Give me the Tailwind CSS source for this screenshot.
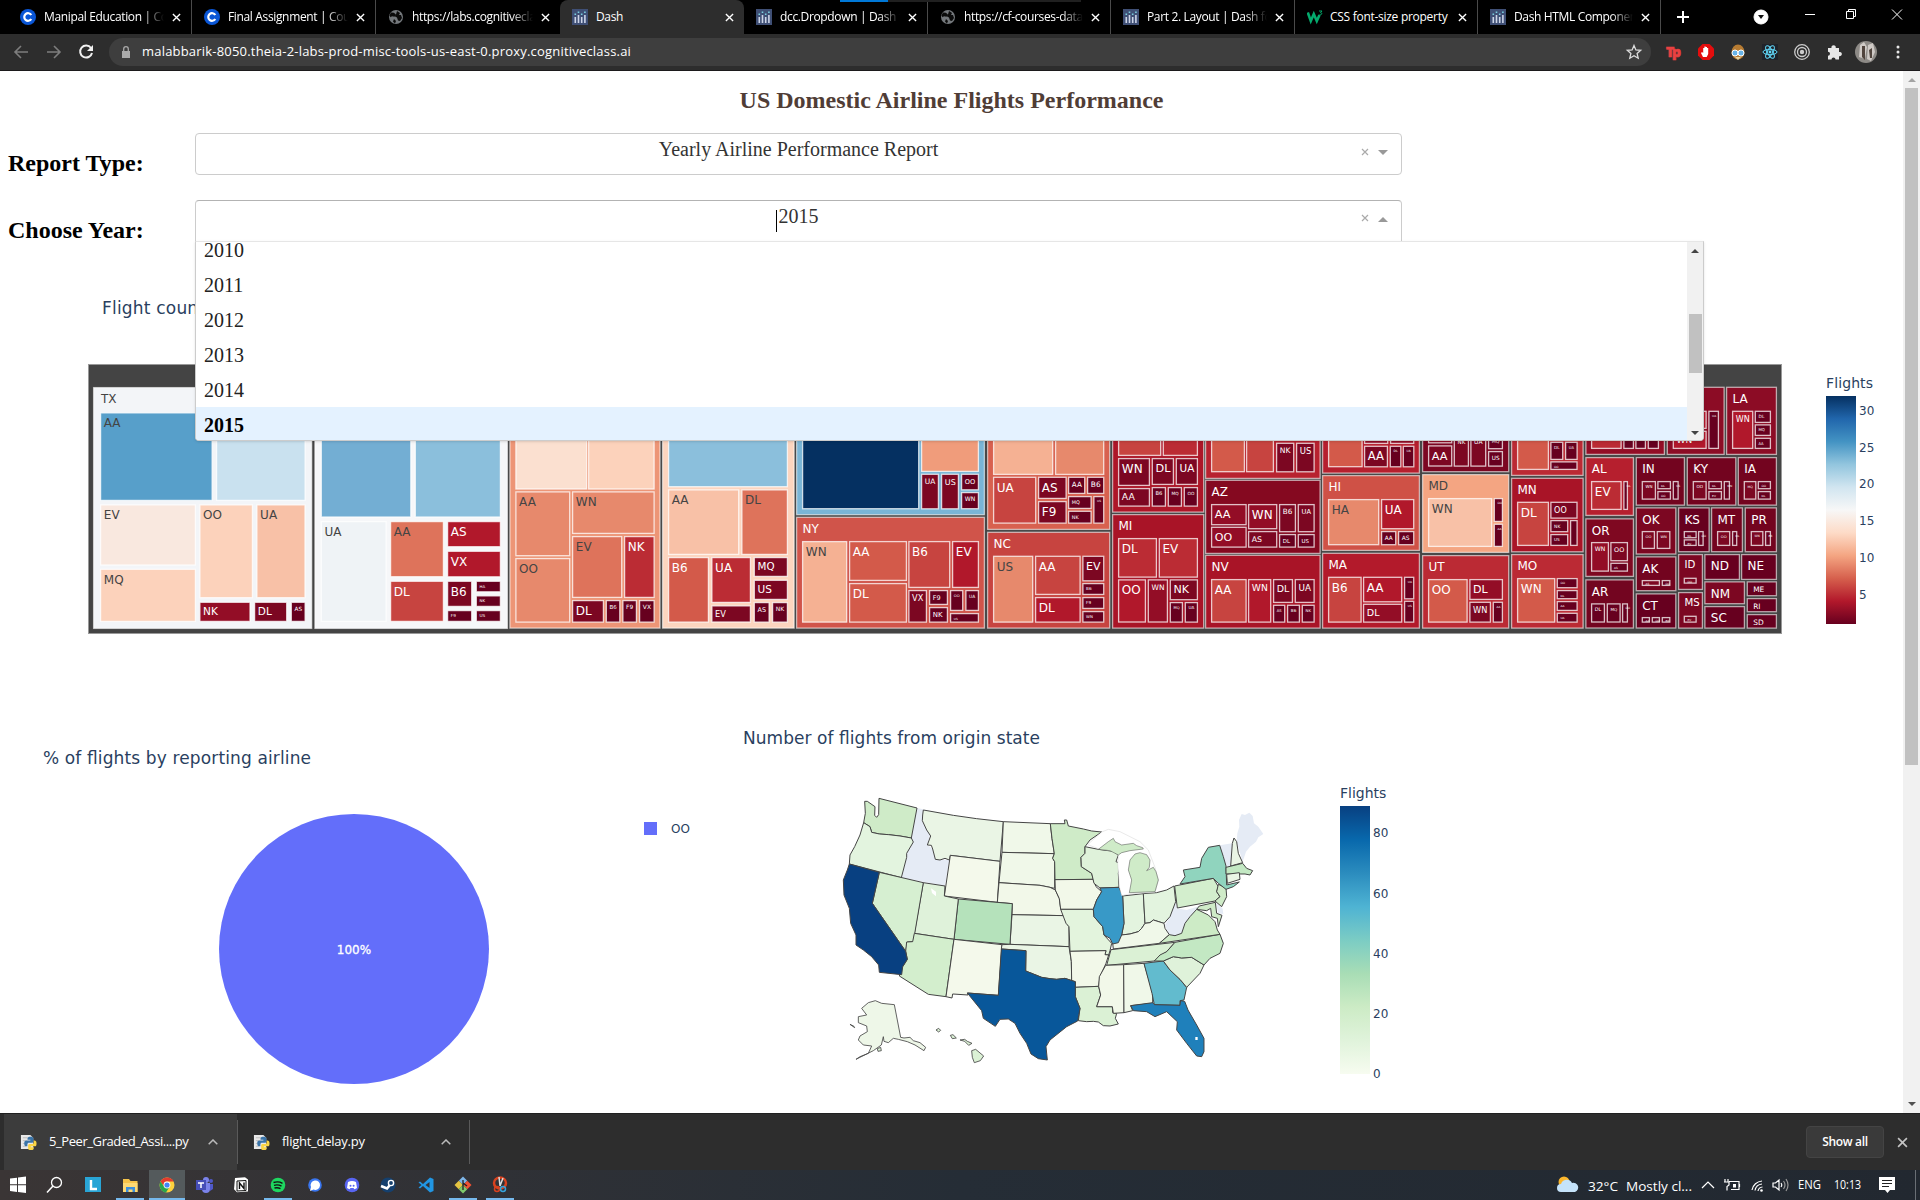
<!DOCTYPE html>
<html lang="en">
<head>
<meta charset="utf-8">
<title>Dash</title>
<script src="https://cdn.jsdelivr.net/npm/@tailwindcss/browser@4"></script>
</head>
<body class="w-[1920px] h-[1200px] overflow-hidden flex flex-col bg-white font-['Open_Sans','Noto_Sans',sans-serif]">
<svg class="hidden">
  <defs>
    <symbol id="coursera" viewBox="0 0 16 16"><circle cx="8" cy="8" r="8" fill="#0a56d6"/><path d="M11.3 6A3.8 3.8 0 1 0 11.3 10" fill="none" stroke="#fff" stroke-width="2.2"/></symbol>
    <symbol id="globe" viewBox="0 0 16 16"><circle cx="8" cy="8" r="7" fill="#74787c"/><path d="M3 3.500l3 .3 2 2-1.500 2-2.500-.5-1.500 1-1-2zM9 2l3 2-1 2h2l1 3-2 3-2-.5-1-3-2-1 1-2zM6 10l2 2-1 2.500-2-2z" fill="#0b0b0b"/></symbol>
    <symbol id="dash" viewBox="0 0 16 16"><path d="M0 0h16v16H0z" fill="#3f4f75"/><path d="M2.500 8h1.600v6H2.500zM5.700 6h1.600v8H5.700zM8.900 8h1.600v6H8.900zM12.100 6h1.600v8h-1.600z" fill="#cdd5e8"/><path d="M2.500 4.500h1.600v1.600H2.500zM5.700 2.500h1.600v1.600H5.700zM8.900 4.500h1.600v1.600H8.900zM12.100 2.500h1.600v1.600h-1.600z" fill="#7bd0df"/></symbol>
    <symbol id="w3" viewBox="0 0 16 16"><path d="M.8 3.500l3 8.500 3-7 3 7 2.700-6" fill="none" stroke="#04aa6d" stroke-width="2.600"/><path d="M12 2h3l-1.500 1.700c2 0 1.700 2.600-1 2" fill="none" stroke="#04aa6d" stroke-width="1"/></symbol>
    <symbol id="x" viewBox="0 0 10 10"><path d="M1 1l8 8M9 1l-8 8" fill="none" stroke="currentColor" stroke-width="1.500"/></symbol>
    <symbol id="py" viewBox="0 0 18 18"><path d="M1 1h10l3 3v12H1z" fill="#e9e9e9"/><path d="M3 4h5M3 7h4M3 10h3M3 13h3" stroke="#bbb"/><path d="M11 3c-3 0-3 1-3 3h3v1H7c-2 0-2.500 1-2.500 3s.8 3 2.300 3h1v-2c0-1 .8-1.700 1.800-1.700h3c1 0 1.600-.7 1.600-1.600V5c0-1.500-1-2-3.200-2z" fill="#3a74a8"/><path d="M11.500 17c3 0 3-1 3-3h-3v-1h4c1.600 0 2-1 2-3s-.8-3-2.300-3h-.7v2c0 1-.8 1.700-1.800 1.700h-2.500c-1 0-1.600.7-1.600 1.600V15c0 1.500 1 2 2.900 2z" fill="#fbd545"/></symbol>
  </defs>
</svg>

<!-- tab strip -->
<header class="relative h-[34px] bg-black flex items-stretch pl-2 text-white text-[12px] tracking-[-0.35px]">
  <div class="absolute left-[840px] top-0 h-[2px] w-[241px] bg-[#202020]"><div class="h-full w-12 bg-[#0078d7]"></div></div>
  <div class="w-[184px] flex items-center pl-3 pr-[10px] border-r border-[#4a4a4a] bg-clip-content"><svg class="size-4 shrink-0 mr-2"><use href="#coursera"/></svg><span class="flex-1 overflow-hidden whitespace-nowrap [mask-image:linear-gradient(90deg,#000_82%,transparent)]">Manipal Education | Coursera</span><svg class="size-[9px] ml-2 shrink-0"><use href="#x"/></svg></div>
  <div class="w-[184px] flex items-center pl-3 pr-[10px] border-r border-[#4a4a4a]"><svg class="size-4 shrink-0 mr-2"><use href="#coursera"/></svg><span class="flex-1 overflow-hidden whitespace-nowrap [mask-image:linear-gradient(90deg,#000_82%,transparent)]">Final Assignment | Coursera</span><svg class="size-[9px] ml-2 shrink-0"><use href="#x"/></svg></div>
  <div class="w-[184px] flex items-center pl-3 pr-[10px]"><svg class="size-4 shrink-0 mr-2"><use href="#globe"/></svg><span class="flex-1 overflow-hidden whitespace-nowrap [mask-image:linear-gradient(90deg,#000_82%,transparent)]">https://labs.cognitiveclass.ai</span><svg class="size-[9px] ml-2 shrink-0"><use href="#x"/></svg></div>
  <div class="w-[184px] flex items-center pl-3 pr-[10px] bg-[#2d2d2d] rounded-t-lg"><svg class="size-4 shrink-0 mr-2"><use href="#dash"/></svg><span class="flex-1">Dash</span><svg class="size-[9px] ml-2 shrink-0"><use href="#x"/></svg></div>
  <div class="w-[184px] flex items-center pl-3 pr-[10px] border-r border-[#4a4a4a]"><svg class="size-4 shrink-0 mr-2"><use href="#dash"/></svg><span class="flex-1 overflow-hidden whitespace-nowrap [mask-image:linear-gradient(90deg,#000_82%,transparent)]">dcc.Dropdown | Dash for Python</span><svg class="size-[9px] ml-2 shrink-0"><use href="#x"/></svg></div>
  <div class="w-[183px] flex items-center pl-3 pr-[10px] border-r border-[#4a4a4a]"><svg class="size-4 shrink-0 mr-2"><use href="#globe"/></svg><span class="flex-1 overflow-hidden whitespace-nowrap [mask-image:linear-gradient(90deg,#000_82%,transparent)]">https://cf-courses-data.s3.us</span><svg class="size-[9px] ml-2 shrink-0"><use href="#x"/></svg></div>
  <div class="w-[184px] flex items-center pl-3 pr-[10px] border-r border-[#4a4a4a]"><svg class="size-4 shrink-0 mr-2"><use href="#dash"/></svg><span class="flex-1 overflow-hidden whitespace-nowrap [mask-image:linear-gradient(90deg,#000_82%,transparent)]">Part 2. Layout | Dash for Python</span><svg class="size-[9px] ml-2 shrink-0"><use href="#x"/></svg></div>
  <div class="w-[183px] flex items-center pl-3 pr-[10px] border-r border-[#4a4a4a]"><svg class="size-4 shrink-0 mr-[7px]"><use href="#w3"/></svg><span class="flex-1 overflow-hidden whitespace-nowrap tracking-[-0.28px]">CSS font-size property</span><svg class="size-[9px] ml-2 shrink-0"><use href="#x"/></svg></div>
  <div class="w-[183px] flex items-center pl-3 pr-[10px] border-r border-[#4a4a4a]"><svg class="size-4 shrink-0 mr-2"><use href="#dash"/></svg><span class="flex-1 overflow-hidden whitespace-nowrap [mask-image:linear-gradient(90deg,#000_82%,transparent)]">Dash HTML Components</span><svg class="size-[9px] ml-2 shrink-0"><use href="#x"/></svg></div>
  <svg class="w-[259px] h-[34px]" viewBox="1661 0 259 34" fill="none" stroke="#fff"><path d="M1677 17h12M1683 11v12" stroke-width="2"/><circle cx="1761" cy="17" r="7" fill="#fff"/><path d="M1758 15h6l-3 4z" fill="#111" stroke="none"/><path d="M1805 14.500h10"/><path d="M1846.500 11.500h7v7h-7zM1848.500 11v-1.500h7v7h-1.500M1892 9.500l10 10M1902 9.500l-10 10"/></svg>
</header>

<!-- toolbar -->
<div class="h-[37px] bg-[#2d2d2d] border-b border-[#1c1a1c] flex items-center">
  <svg class="w-[109px] h-9" viewBox="0 34 109 36" fill="none" stroke="#7d7d7d" stroke-width="1.600"><path d="M28 52H15M21 46l-6 6 6 6M47 52h13M54 46l6 6-6 6"/><path d="M91 48a6 6 0 1 0 1 5" stroke="#f1f1f1" stroke-width="2"/><path d="M93 45v6h-6z" fill="#f1f1f1" stroke="none"/></svg>
  <div class="w-[1542px] h-[28px] rounded-full bg-[#3e3e3e] flex items-center pl-3 pr-2 text-white text-[13px]">
    <svg class="w-[10px] h-3 mr-[11px]" viewBox="0 0 10 12"><path d="M1 5h8v7H1z" fill="#aaa"/><path d="M2.700 5V3a2.300 2.300 0 0 1 4.600 0v2" fill="none" stroke="#aaa" stroke-width="1.300"/></svg>
    <span class="flex-1 whitespace-nowrap tracking-[0.2px]">malabbarik-8050.theia-2-labs-prod-misc-tools-us-east-0.proxy.cognitiveclass.ai</span>
    <svg class="size-[18px]" viewBox="0 0 18 18"><path d="M9 2.500l1.900 4.400 4.800.4-3.600 3.200 1.100 4.700L9 12.700l-4.200 2.500 1.100-4.700L2.300 7.300l4.800-.4z" fill="none" stroke="#ddd" stroke-width="1.300"/></svg>
  </div>
  <svg class="flex-1 h-9" viewBox="1651 34 269 36"><text x="1666" y="57" class="font-extrabold text-[14px]" fill="#e94141" stroke="#e94141" stroke-width=".6" textLength="15">Tp</text>
    <path d="M1702.500 44h7l4.500 4.500v7l-4.500 4.500h-7l-4.500-4.500v-7z" fill="#e40d0d"/><path d="M1703 57l-2-4 1-1 1.200 1v-5h1.200v3-4.500h1.300v4.500-4h1.300v4-3h1.200v6l-1.500 3z" fill="#fff"/>
    <ellipse cx="1738" cy="52" rx="6.500" ry="7.500" fill="#b67b32"/><circle cx="1735" cy="53" r="3" fill="#68b4e8" stroke="#fff"/><circle cx="1741" cy="53" r="3" fill="#68b4e8" stroke="#fff"/><path d="M1735 57h6l-3 3z" fill="#e8d3a0"/>
    <path d="M1762 44h16v16h-16z" fill="#20232a"/><g fill="none" stroke="#61dafb"><ellipse cx="1770" cy="52" rx="7" ry="2.700"/><ellipse cx="1770" cy="52" rx="7" ry="2.700" transform="rotate(60 1770 52)"/><ellipse cx="1770" cy="52" rx="7" ry="2.700" transform="rotate(120 1770 52)"/></g><circle cx="1770" cy="52" r="1.400" fill="#61dafb"/>
    <g fill="none" stroke="#ccc" stroke-width="1.300"><circle cx="1802" cy="52" r="7.300"/><circle cx="1802" cy="52" r="4.500"/></g><circle cx="1802" cy="52" r="2.200" fill="#ccc"/>
    <path d="M1828 48h3.500a2.200 2.200 0 1 1 4.200 0h3.300v4a2.200 2.200 0 1 1 0 4.200v3.300h-3.500a2 2 0 1 0-4 0h-3.500v-3.800a2 2 0 1 0 0-4z" fill="#e8e8e8"/>
    <circle cx="1866" cy="52" r="11" fill="#8d8a86"/><path d="M1860 45l4-3 3 5-2 12-6-2zM1868 45l5-2 2 9-4 9-4-2z" fill="#cfcac6"/><path d="M1862 46h3v14l-3-3zM1869 50l3-2v10h-2z" fill="#51453e"/>
    <g fill="#e8e8e8"><circle cx="1898" cy="47" r="1.500"/><circle cx="1898" cy="52" r="1.500"/><circle cx="1898" cy="57" r="1.500"/></g>
  </svg>
</div>

<!-- page -->
<div class="h-[1042px] flex bg-white">
<main class="relative w-[1903px] h-[1042px] overflow-hidden">
  <section class="h-[199px] font-['Liberation_Serif',serif]">
    <h1 class="h-[62px] pt-[12px] text-center text-[24px] leading-[34px] font-bold text-[#503d36]">US Domestic Airline Flights Performance</h1>
    <div class="flex h-[67px]">
      <h2 class="w-[195px] pl-2 pt-[16px] text-[24px] leading-[28px] font-bold">Report Type:</h2>
      <div class="w-[1207px] h-[42px] border border-[#ccc] rounded flex text-[20px] text-[#333]">
        <span class="flex-1 text-center leading-[30px]">Yearly Airline Performance Report</span>
        <svg class="absolute left-[1358px] top-[73px] w-8 h-4" viewBox="0 0 32 16"><path d="M4 5l6 6M10 5l-6 6" stroke="#aaa" stroke-width="1.200"/><path d="M20 6h10l-5 5z" fill="#999"/></svg>
      </div>
    </div>
    <div class="flex h-[67px]">
      <h2 class="w-[195px] pl-2 pt-[16px] text-[24px] leading-[28px] font-bold">Choose Year:</h2>
      <div class="w-[1207px] h-[42px] border border-[#ccc] border-t-[#b3b3b3] rounded-t flex text-[20px] text-[#333]">
        <span class="flex-1 pr-[3px] text-center leading-[30px]"><span class="inline-block w-px h-[22px] bg-black align-middle translate-y-[3px] mr-[2px]"></span>2015</span>
        <svg class="absolute left-[1358px] top-[139px] w-8 h-4" viewBox="0 0 32 16"><path d="M4 5l6 6M10 5l-6 6" stroke="#aaa" stroke-width="1.200"/><path d="M20 12h10l-5-5z" fill="#999"/></svg>
      </div>
    </div>
  </section>

  <svg id="tree" class="block w-[1903px] h-[430px] font-['DejaVu_Sans',sans-serif]" viewBox="0 270 1903 430">
    <defs>
      <linearGradient id="rdbu" x1="0" y1="1" x2="0" y2="0"><stop offset="0" stop-color="#67001f"/><stop offset=".1" stop-color="#b2182b"/><stop offset=".2" stop-color="#d6604d"/><stop offset=".3" stop-color="#f4a582"/><stop offset=".4" stop-color="#fddbc7"/><stop offset=".5" stop-color="#f7f7f7"/><stop offset=".6" stop-color="#d1e5f0"/><stop offset=".7" stop-color="#92c5de"/><stop offset=".8" stop-color="#4393c3"/><stop offset=".9" stop-color="#2166ac"/><stop offset="1" stop-color="#053061"/></linearGradient>
    </defs>
    <g fill="#2a3f5f"><text x="102" y="314" class="text-[17px]" textLength="103">Flight count</text>
    <text x="1826" y="388" class="text-[14px]" textLength="47">Flights</text>
    <g class="text-[12px]"><text x="1859" y="415">30</text><text x="1859" y="452">25</text><text x="1859" y="488">20</text><text x="1859" y="525">15</text><text x="1859" y="562">10</text><text x="1859" y="599">5</text></g></g>
    <rect x="1826" y="396" width="30" height="228" fill="url(#rdbu)"/>
    <rect x="88.500" y="364.500" width="1693" height="269" fill="#444" stroke="#999"/>
  </svg>

  <div class="flex h-[413px]">
    <svg class="w-[743px] h-[413px] font-['DejaVu_Sans',sans-serif]" viewBox="0 700 743 413">
      <text x="43" y="764" class="text-[17px]" fill="#2a3f5f" textLength="268">% of flights by reporting airline</text>
      <circle cx="354" cy="949" r="135" fill="#636efa"/>
      <text x="354" y="954" class="text-[12px]" text-anchor="middle" fill="#fff" stroke="#fff" stroke-width=".3">100%</text>
      <path d="M644 822h13v13h-13z" fill="#636efa"/><text x="671" y="833" class="text-[12px]" fill="#2a3f5f">OO</text>
    </svg>
    <svg class="w-[1160px] h-[413px] font-['DejaVu_Sans',sans-serif]" viewBox="743 700 1160 413">
      <defs><linearGradient id="gnbu" x1="0" y1="1" x2="0" y2="0"><stop offset="0" stop-color="#f7fcf0"/><stop offset=".125" stop-color="#e0f3db"/><stop offset=".25" stop-color="#ccebc5"/><stop offset=".375" stop-color="#a8ddb5"/><stop offset=".5" stop-color="#7bccc4"/><stop offset=".625" stop-color="#4eb3d3"/><stop offset=".75" stop-color="#2b8cbe"/><stop offset=".875" stop-color="#0868ac"/><stop offset="1" stop-color="#084081"/></linearGradient></defs>
      <g fill="#2a3f5f"><text x="743" y="744" class="text-[17px]" textLength="297">Number of flights from origin state</text><text x="1340" y="798" class="text-[14px]">Flights</text>
      <g class="text-[12px]"><text x="1373" y="837">80</text><text x="1373" y="898">60</text><text x="1373" y="958">40</text><text x="1373" y="1018">20</text><text x="1373" y="1078">0</text></g></g>
      <rect x="1340" y="806" width="30" height="268" fill="url(#gnbu)"/>
      <g transform="translate(820 780) scale(.33333)" stroke-linejoin="round">
        <g fill="#e5ebf5">
          <path d="M291 84L310 88 307 120 330 166 322 195 338 207 346 238 388 240 375 318 246 293 260 232 260 218 280 186 274 174z"/>
          <path d="M1199 196L1237 190 1232 258 1216 260z"/><path d="M1250 185L1252 160 1258 140 1257 120 1265 102 1275 105 1288 98 1298 108 1302 130 1315 140 1330 162 1315 172 1308 185 1290 200 1278 215 1268 245z"/>
          <path d="M1067 366L1070 385 1100 390 1138 378 1130 388 1110 410 1095 430 1085 460 1065 467 1045 462 1035 435 1050 410z"/><path d="M1188 368l20 18 2 16-15-2z"/>
        </g>
        <g stroke="#444" stroke-width="3">
          <path fill="#cfebc8" d="M134 64L142 64 165 80 164 106 170 112 176 104 177 55 291 84 274 174 240 168 206 164 178 162 155 157 150 140 131 128 136 100z"/>
          <path fill="#e3f4df" d="M131 128L150 140 155 157 178 162 206 164 240 168 274 174 280 186 260 220 260 232 244 293 88 252 90 225 104 200 120 165z"/>
          <path fill="#eaf5e5" d="M310 90L400 106 470 116 550 125 540 244 391 226 388 240 375 235 360 240 346 238 338 207 334 196 322 195 332 168 320 150 307 122 308 105z"/>
          <path fill="#f4f9eb" d="M391 226L540 244 532 367 373 348z"/>
          <path fill="#f0f8e9" d="M550 125L691 131 696 175 703 221 546 217z"/>
          <path fill="#f0f8e9" d="M546 217L703 221 698 235 704 245 704 325 680 320 660 316 537 308z"/>
          <path fill="#f2f8e9" d="M537 308L660 316 690 322 706 330 718 356 722 386 735 407 576 404 577 371 532 367z"/>
          <path fill="#eaf5e5" d="M576 404L735 407 740 430 747 440 747 500 570 493z"/>
          <path fill="#b5e2bb" d="M415 357L577 371 570 493 402 478z"/>
          <path fill="#dff2da" d="M310 308L375 318 373 348 415 357 402 478 283 460z"/>
          <path fill="#d6efd1" d="M178 277L310 308 280 485 262 486 257 514 157 370z"/>
          <path fill="#d3eecd" d="M283 460L402 478 378 650 325 643 238 588 248 560 262 538 257 514 260 486 278 485z"/>
          <path fill="#f4f9eb" d="M402 478L546 494 535 646 442 639 444 645 398 642 396 654 378 650z"/>
          <path fill="#eaf5e5" d="M546 494L570 493 747 500 754 544 755 602 735 595 710 598 690 596 665 592 640 582 617 573 618 512 544 507z"/>
          <path fill="#cfebc8" d="M691 131L735 131 733 120 740 120 745 138 790 147 815 153 845 156 810 180 795 200 795 220 783 232 784 260 815 280 820 298 705 299 704 245 698 235 703 221 696 175z"/>
          <path fill="#f2f8e9" d="M705 299L820 298 828 320 845 335 830 360 820 388 722 388 718 356 706 330z"/>
          <path fill="#e3f4dd" d="M722 388L820 388 822 410 848 440 852 465 875 490 870 512 866 525 855 524 858 512 750 514 747 440 738 430z"/>
          <path fill="#f2f8e9" d="M750 514L858 512 855 524 866 525 858 550 840 590 836 619 766 622 766 605 755 602 754 544z"/>
          <path fill="#dbf1d5" d="M766 622L836 619 842 645 830 680 877 680 878 698 890 700 886 715 895 732 870 738 850 737 835 726 820 724 800 725 775 722 780 685 766 650z"/>
          <path fill="#dff2da" d="M795 200L835 208 880 214 895 225 888 245 900 250 895 280 897 322 840 324 822 310 815 280 784 260 783 232 795 220z"/>
          <path fill="#e3f4df" d="M908 348L970 341 975 430 965 445 955 455 930 462 905 465 912 430z"/>
          <path fill="#e3f4df" d="M970 341L1010 338 1040 330 1062 318 1067 365 1050 410 1032 430 1000 420 990 428 975 430z"/>
          <path fill="#f0f8e9" d="M905 465L930 462 955 455 965 445 975 430 990 428 1000 420 1032 430 1035 445 1048 464 1018 490 880 507 878 490z"/>
          <path fill="#dbf1d5" d="M873 509L1065 487 1040 515 1003 543 860 556z"/>
          <path fill="#f2f8e9" d="M857 556L911 554 912 698 880 700 877 680 830 680 842 645 836 619 838 590z"/>
          <path fill="#f0f8e9" d="M911 554L972 550 990 610 998 640 998 670 932 677 938 692 912 698z"/>
          <path fill="#62bbce" d="M972 550L1030 543 1050 570 1080 598 1100 622 1092 660 1080 662 1080 676 1003 674 996 640z"/>
          <path fill="#1f80bb" d="M932 677L998 668 1003 674 1080 676 1082 662 1094 664 1104 690 1130 735 1152 775 1152 815 1145 830 1130 828 1100 790 1070 750 1072 725 1040 695 1005 710 980 695 940 692z"/>
          <path fill="#3899c7" d="M840 324L897 322 908 348 912 430 905 465 895 488 878 492 870 475 852 465 848 440 822 410 820 388 830 360 845 335z"/>
          <path fill="#dff2da" d="M1030 543L1060 530 1085 534 1115 532 1152 555 1140 580 1100 622 1080 598 1050 570z"/>
          <path fill="#c3e8c3" d="M1065 487L1200 463 1210 490 1200 520 1170 535 1152 555 1115 532 1085 534 1060 530 1030 543 1003 543 1020 525 1040 515z"/>
          <path fill="#cdebc6" d="M1018 490L1048 464 1065 467 1085 460 1095 430 1110 410 1130 388 1165 405 1185 425 1192 450 1200 463z"/>
          <path fill="#d3eecd" d="M1064 318L1180 295 1195 320 1190 335 1200 350 1185 363 1072 384z"/>
          <path fill="#cfebc8" d="M1130 388L1138 378 1186 367 1190 400 1206 406 1195 440 1192 415 1175 410 1172 385 1160 392z"/>
          <path fill="#cfebc8" d="M1195 313L1218 323 1220 350 1205 380 1185 363 1200 350 1190 335z"/>
          <path fill="#90d4be" d="M1080 312L1095 290 1090 270 1140 262 1145 235 1165 202 1199 196 1210 230 1218 258 1220 315 1258 306 1240 320 1218 328 1195 310 1180 295z"/>
          <path fill="#eaf5e5" d="M1237 190L1242 174 1250 185 1255 220 1268 248 1232 258z"/>
          <path fill="#c3e8c3" d="M1218 262L1268 250 1280 265 1298 272 1290 285 1275 282 1218 282z"/>
          <path fill="#eaf5e5" d="M1220 283L1258 278 1260 298 1222 310z"/>
          <path fill="#084081" d="M88 252L178 277 157 370 257 514 262 538 248 560 245 584 178 577 176 555 155 530 130 510 108 495 108 465 92 430 88 385 72 345 70 300 82 270z"/>
          <path fill="#08579a" d="M544 507L618 512 617 573 640 582 665 592 690 596 710 598 735 595 766 605 766 650 780 685 773 723 740 740 690 780 678 800 682 840 655 836 633 822 620 790 600 760 585 730 565 717 540 718 526 739 490 715 485 692 442 639 535 646z"/>
          <path fill="#eef7e8" stroke-width="2.500" d="M166 662L185 670 223 674 242 772 252 774 270 772 280 782 300 788 317 802 312 812 285 795 262 785 235 778 220 775 205 788 192 784 190 770 184 795 160 812 108 838 120 830 145 820 155 798 130 795 115 780 120 768 142 755 140 738 115 728 115 710 140 705 125 685 145 668z"/>
          <path fill="#dbf1d5" stroke-width="2.500" d="M348 750l8-5 6 6-6 5zM391 766l8-2 10 10-12 2zM420 780l14-2 8 6 14 6-10 6-12-12zM455 812l12-4 24 20-10 14-18 6-6-16zM90 733l12 6 2 4zM172 806l10-4 2 10-10 2z"/>
        </g>
        <path fill="#fff" d="M333 325l15 10 0 14-12-10zM1126 771h7v9h-7z"/>
        <path fill="#fff" stroke="#bbb" stroke-width="1" d="M803 194L845 156 865 148 900 155 960 185 985 210 1005 262 1015 300 1005 337 928 342 905 347 898 320 893 250 895 225 880 214 835 206z"/>
        <g fill="#cfebc8" stroke="#444" stroke-width="1.500"><path d="M835 208L865 185 880 175 885 185 905 195 940 190 950 197 968 203 970 207 930 212 905 218 895 225 870 212z"/>
        <path d="M928 338L935 300 925 270 930 240 945 222 960 218 980 224 990 240 988 262 980 272 1000 262 1008 275 1015 300 1005 335z"/></g>
      </g>
    </svg>
  </div>

  <!-- year menu -->
  <div class="absolute left-[195px] top-[170px] w-[1509px] h-[200px] bg-white border border-[#ccc] border-t-[#e6e6e6] rounded-b shadow-sm flex overflow-hidden font-['Liberation_Serif',serif] text-[20px] text-[#222]">
    <ul class="flex-1 -mt-[10px] leading-[36px] [&>li]:pl-2 [&>li]:h-[35px]">
      <li>2010</li><li>2011</li><li>2012</li><li>2013</li><li>2014</li><li class="bg-[#e4f2ff] font-bold text-black">2015</li>
    </ul>
    <div class="w-[16px] bg-[#f1f1f1] flex flex-col items-center justify-between py-[7px]">
      <svg class="w-2 h-1" viewBox="0 0 8 4"><path d="M0 4h8L4 0z" fill="#444"/></svg>
      <div class="w-[13px] h-[59px] bg-[#c1c1c1] translate-y-[2px]"></div>
      <svg class="w-2 h-1 translate-y-[2px]" viewBox="0 0 8 4"><path d="M0 0h8L4 4z" fill="#444"/></svg>
    </div>
  </div>
</main>
<div class="w-[17px] bg-[#f1f1f1] flex flex-col items-center">
  <svg class="w-2 h-[17px]" viewBox="0 0 8 17"><path d="M0 11h8L4 7z" fill="#a3a3a3"/></svg>
  <div class="w-[13px] h-[677px] bg-[#c1c1c1]"></div>
  <svg class="w-2 h-[17px] mt-auto" viewBox="0 0 8 17"><path d="M0 6h8l-4 4z" fill="#505050"/></svg>
</div>
</div>

<!-- downloads -->
<div class="h-[57px] bg-[#2d2d2d] border-t border-[#202020] flex items-center text-white text-[13px]">
  <div class="ml-1 w-[233px] h-full bg-[#3c3c3c] flex items-center pl-4 pr-[19px]"><svg class="size-[17px] mr-3"><use href="#py"/></svg><span class="flex-1 tracking-[-0.42px]">5_Peer_Graded_Assi....py</span><svg class="w-[10px] h-[6px]" viewBox="0 0 10 6"><path d="M.7 5.300L5 1l4.300 4.300" fill="none" stroke="#bbb" stroke-width="1.500"/></svg></div>
  <div class="w-[233px] h-11 border-x border-[#5a5a5a] flex items-center pl-[15px] pr-[18px]"><svg class="size-[17px] mr-3"><use href="#py"/></svg><span class="flex-1 tracking-[-0.25px]">flight_delay.py</span><svg class="w-[10px] h-[6px]" viewBox="0 0 10 6"><path d="M.7 5.300L5 1l4.300 4.300" fill="none" stroke="#bbb" stroke-width="1.500"/></svg></div>
  <div class="ml-auto w-[78px] h-8 rounded bg-[#3a3a3a] border border-[#444] flex items-center justify-center text-[12px] font-semibold tracking-[-0.3px]">Show all</div>
  <svg class="size-[11px] ml-[13px] mr-[12px] text-[#c4c4c4]"><use href="#x"/></svg>
</div>

<!-- taskbar -->
<footer class="h-[30px] bg-linear-to-r from-[#3a3535] via-[#252d36] to-[#222830]">
<svg class="block w-[1920px] h-[30px]" viewBox="0 1170 1920 30">
  <path d="M149 1170h36v30h-36z" fill="#545a5c"/>
  <g fill="#76b9ed"><path d="M116 1198h28v2h-28zM149 1198h36v2h-36zM264 1198h28v2h-28zM449 1198h28v2h-28zM486 1198h28v2h-28z"/></g>
  <path d="M10 1178.500l7-.8v6.600h-7zM18 1177.600l8-1v7.700h-8zM10 1185.300h7v6.600l-7-.8zM18 1185.300h8v7.700l-8-1z" fill="#fff"/>
  <circle cx="56.500" cy="1182.500" r="5" fill="none" stroke="#fff" stroke-width="1.300"/><path d="M53 1186l-6 6.500" stroke="#fff" stroke-width="1.500"/>
  <path d="M85 1177h16v15H85z" fill="#29a5d6"/><path d="M91 1180v9h6" stroke="#fff" stroke-width="2.400" fill="none"/>
  <path d="M123 1179h6l1.500 2h7v11H123z" fill="#f6c34a"/><path d="M123 1183h14.500v9H123z" fill="#fdd974"/><path d="M126 1187h9v5h-2.500v-2.500h-4v2.500H126z" fill="#3c8fdc"/>
  <circle cx="167" cy="1185" r="7.500" fill="#fdd13d"/><path d="M160.500 1181.500a7.500 7.500 0 0 1 13.200 0h-6.700a3.500 3.500 0 0 0-3.300 4.500z" fill="#e33b2e"/><path d="M160.500 1181.500a7.500 7.500 0 0 0 5.500 11l3.500-5.500a3.500 3.500 0 0 1-5.500-.5z" fill="#2aa54c"/><circle cx="167" cy="1185" r="3.400" fill="#fff"/><circle cx="167" cy="1185" r="2.600" fill="#4285f4"/>
  <circle cx="206" cy="1180" r="3" fill="#7b83eb"/><circle cx="211" cy="1181" r="2" fill="#5059c9"/><path d="M202 1183h8v6a4 4 0 0 1-8 0z" fill="#7b83eb"/><path d="M210 1184h3v5l-3 2z" fill="#5059c9"/><path d="M196 1180h10v10h-10z" fill="#464eb8"/><path d="M198 1183h6M201 1183v5" stroke="#fff" stroke-width="1.500"/>
  <path d="M235 1178l10-.8 3 2.300v12l-11 .7-3-3z" fill="#fff"/><path d="M237 1181l9-.5v10l-9 .5z" fill="#fff" stroke="#111"/><path d="M239.500 1189v-6l4.500 5.500v-6" stroke="#111" stroke-width="1.400" fill="none"/>
  <circle cx="278" cy="1185" r="7.300" fill="#1ed760"/><path d="M273.500 1182.500q5-1.500 9 .8M274 1185.300q4-1.200 7.500.8M274.500 1188q3.500-.8 6 .6" stroke="#111" stroke-width="1.400" fill="none"/>
  <circle cx="315" cy="1185" r="6.800" fill="#3a76f0"/><path d="M310 1191l1-4a4.700 4.700 0 1 1 2.500 2.500z" fill="#fff"/>
  <circle cx="352" cy="1185" r="7.300" fill="#5865f2"/><path d="M348 1182q4-2 8 0l1 6-2.500 1.300-1-1.300h-3l-1 1.300L347 1188z" fill="#fff"/><circle cx="350.500" cy="1185.700" r="1" fill="#5865f2"/><circle cx="353.600" cy="1185.700" r="1" fill="#5865f2"/>
  <circle cx="388" cy="1185" r="7.500" fill="#15406e"/><circle cx="391" cy="1183" r="2.600" fill="none" stroke="#fff" stroke-width="1.400"/><path d="M381 1186l6 2.500 2.500-3" stroke="#fff" stroke-width="2.600" fill="none"/>
  <path d="M430 1177.500l3.500 1.500v12l-3.500 1.500-7-6.500-3 2.500-1.500-1 3-2.500-3-2.500 1.500-1 3 2.500zM429.500 1182l-4 3 4 3z" fill="#2196e3" fill-rule="evenodd"/>
  <g transform="rotate(45 463 1185)"><path d="M457 1179h6v6h-6z" fill="#7db5e8"/><path d="M463 1179h6v6h-6z" fill="#f05133"/><path d="M457 1185h6v6h-6z" fill="#e4c542"/><path d="M463 1185h6v6h-6z" fill="#7fc96b"/></g><path d="M463 1180v10M463 1183l4 3" stroke="#222" stroke-width="1.300"/>
  <ellipse cx="500" cy="1183" rx="6" ry="5.500" fill="none" stroke="#d8421f" stroke-width="2.500"/><path d="M499 1177l1 9M503 1178l-3 8" stroke="#ddd" stroke-width="1.500"/><circle cx="497" cy="1189" r="2.500" fill="none" stroke="#d8421f" stroke-width="1.500"/><circle cx="503" cy="1189" r="2.500" fill="none" stroke="#36a3dc" stroke-width="1.500"/>
  <circle cx="1564" cy="1182" r="5.500" fill="#fbb62c"/><path d="M1561 1192a4 4 0 0 1 0-8 6 6 0 0 1 11-1 4.600 4.600 0 0 1 3 9z" fill="#c5e3fa"/>
  <g fill="#fff"><text x="1588" y="1191" class="text-[13px]" textLength="30" lengthAdjust="spacingAndGlyphs">32°C</text><text x="1626" y="1191" class="text-[13px]" textLength="66" lengthAdjust="spacingAndGlyphs">Mostly cl...</text><text x="1798" y="1189" class="text-[12px]" textLength="23" lengthAdjust="spacingAndGlyphs">ENG</text><text x="1834" y="1189" class="text-[12px]" textLength="27" lengthAdjust="spacingAndGlyphs">10:13</text></g>
  <g fill="none" stroke="#fff" stroke-width="1.200"><path d="M1702 1188l6-6 6 6M1729 1181.500h10v8h-8M1739.500 1184v3M1725 1179v3M1728 1179v3M1724 1182h5v3l-2 1.500v4"/><path d="M1773 1183h2.500l3.500-3v10l-3.500-3h-2.500zM1781 1183q1.500 2 0 4"/><path d="M1783.500 1181q3 4 0 8M1786 1179q4 6 0 12" stroke="#999"/><path d="M1752 1190a11 11 0 0 1 10-9M1755 1190.500a8 8 0 0 1 7-6.500M1758 1191a5 5 0 0 1 4.500-4" /></g>
  <path d="M1733 1184h3v3.500h-3z" fill="#fff"/><circle cx="1761.500" cy="1190.500" r="1.300" fill="#fff"/>
  <path d="M1879 1177h16v13h-5l-2.500 3-2.500-3h-6z" fill="#fff"/><path d="M1882 1180.500h10M1882 1183.500h10M1882 1186.500h7" stroke="#222" stroke-width="1.200"/>
  <path d="M1915.500 1170v30" stroke="#6a6f75"/>
</svg>
</footer>

<script>
// Rows: x1,y1,x2,y2,fill,label[,kind]; kind "s" marks a state header. Units are thirds of a pixel from each block's origin.
const K={a:'#67001f',b:'#7c0722',c:'#930d26',d:'#b1182b',e:'#bb2c34',f:'#c74440',g:'#d35a4a',h:'#de735b',i:'#e7896c',j:'#f09c7b',k:'#f5b193',l:'#f8c1a7',m:'#fcd2bb',n:'#8bbfdc'};
// Natural label widths at 12px
const W={WN:20.6,MQ:19,OO:18.900,UA:17,NK:17,AA:16.400,VX:16.400,HA:17.200,F9:14.600};
const blocks=[
[80,350,`39 111 697 837 #f3f5f8 TX s|60 187 398 453 #579fca AA|408 187 677 453 #c9e1ef -|60 463 348 647 #f9e8df EV|60 656 348 816 m MQ|358 463 519 745 m OO|529 463 677 745 l UA|358 755 512 816 c NK|522 755 622 816 b DL|632 755 677 816 a AS
703 111 1284 837 #f6f7f9 - s|722 187 994 503 #73aed3 -|1004 187 1263 503 n -|722 513 920 816 #eff3f6 UA|930 513 1092 682 h AA|930 692 1092 816 f DL|1101 513 1263 592 d AS|1101 602 1263 682 d VX|1101 692 1177 771 b B6|1187 692 1263 727 a HA|1187 736 1263 771 a NK|1101 780 1177 816 a F9|1187 780 1263 816 a US`],
[500,430,`28 -130 482 596 #ed9576 IL s|46 -50 262 179 #fbe0d0 UA|264 -50 464 179 m MQ|46 184 211 379 i AA|46 384 211 578 i OO|216 184 464 312 i WN|216 318 367 504 h EV|372 318 464 504 e NK|216 510 312 578 b DL|317 510 361 578 a B6|367 510 411 578 a F9|417 510 464 578 a VX
486 -130 884 596 #fcd5bf FL s|504 -50 864 172 n WN|504 178 718 375 l AA|724 178 864 375 h DL|504 381 627 578 g B6|634 381 753 519 e UA|634 526 753 578 b EV|761 381 864 441 b MQ|761 449 864 510 b US|761 516 809 578 a AS|816 516 864 578 a NK`],
[790,430,`18 -130 585 256 #7ab5d6 GA s|36 -50 388 238 #053061 DL|393 -50 567 126 j EV|393 131 447 238 b UA|453 131 507 238 b US|513 131 567 181 a OO|513 186 567 238 a WN
18 260 585 596 #d0544a NY s|36 333 172 578 k WN|177 333 351 453 g AA|177 459 351 578 g DL|355 333 481 474 f B6|486 333 567 474 d EV|355 480 411 578 b VX|417 480 474 525 a F9|417 531 474 578 a NK|480 480 520 543 a OO|526 480 567 543 a UA|480 549 567 578 a US
591 -130 961 300 #d8614f CO s|609 -50 790 135 k WN|795 -50 943 135 i OO|609 140 739 281 f UA|744 140 830 207 b AS|744 213 830 281 b F9|834 140 886 192 a AA|891 140 943 192 a B6|834 198 905 237 a MQ|834 242 905 281 a NK|910 198 943 281 a US
591 305 961 596 f NC s|609 377 730 578 i US|735 377 872 495 f AA|735 501 872 578 d DL|877 377 943 454 b EV|877 459 943 495 a B6|877 501 943 537 a F9|877 543 943 578 a WN`],
[1100,430,`36 -130 313 248 #ad1628 VA s|54 -50 184 78 f EV|188 -50 294 78 e OO|54 84 150 168 b WN|54 174 150 230 b AA|155 84 222 165 b DL|227 84 294 165 b UA|155 171 198 230 a B6|203 171 246 230 a MQ|251 171 294 230 a OO
36 252 313 596 #a91427 MI s|54 324 171 443 e DL|176 324 294 443 e EV|54 448 138 578 d OO|143 448 204 578 c WN|209 448 294 511 b NK|209 516 249 578 a MQ|254 516 294 578 a UA
315 -130 662 147 #b8222f PA s|333 -50 435 127 g AA|438 -50 522 127 f WN|528 38 583 127 b NK|588 38 644 127 b US
315 149 662 372 #850920 AZ s|333 222 440 286 c AA|333 290 440 353 c OO|444 222 532 298 c WN|444 303 532 353 b AS|537 222 588 307 b B6|537 312 588 353 a DL|593 222 644 307 b UA|593 312 644 353 a US
315 374 662 596 #a91427 NV s|333 447 440 578 f AA|444 447 514 578 d WN|519 447 579 519 b DL|584 447 644 519 b UA|519 524 556 578 a AS|561 524 600 578 a B6|605 524 644 578 a NK
666 -130 960 131 #b61f2e WA s|684 -50 788 112 g AS|792 -50 865 42 c UA|870 -50 943 42 c OO|792 47 864 112 b AA|869 47 904 112 a DL|908 47 943 112 a UA
666 135 960 363 #cf5146 HI s|684 207 838 346 i HA|843 207 943 298 d UA|843 303 889 346 a AA|894 303 943 346 a AS
666 368 960 596 #b31a2b MA s|684 440 785 578 f B6|789 440 907 517 d AA|789 521 907 578 c DL|912 440 943 508 a UA|912 512 943 578 a US`],
[1410,360,`36 80 298 337 b - s|54 152 127 250 c -|54 256 127 320 b AA|131 225 177 320 b NK|181 225 229 320 b UA|234 225 279 268 a MQ|234 273 279 320 a US
36 342 298 579 #f4a582 MD s|54 414 247 561 l WN|251 414 279 486 a OO|251 491 279 561 a AA
36 585 298 806 #bb2a34 UT s|54 657 173 788 g OO|178 657 279 720 c DL|178 725 243 788 b WN|248 725 279 788 a AA
303 80 521 348 #bb2a34 - s|321 152 417 330 g -|421 245 460 300 a DL|465 245 503 300 a UA|421 304 503 330 a OO
303 353 521 577 #a91427 MN s|321 425 417 558 f DL|421 425 503 476 b OO|421 480 475 517 a NK|421 522 475 558 a US|480 480 503 558 a -
303 582 521 806 #bb2a34 MO s|321 654 436 788 g WN|440 654 503 685 a OO|440 690 503 718 a DL|440 723 503 753 a AA|440 758 503 788 a UA
526 80 765 285 c - s|543 152 635 267 e -|640 152 672 267 a -|676 152 708 267 a -|713 152 747 267 a -
770 80 944 285 #8c0c25 - s|788 152 890 207 d -|788 212 890 267 d WN|895 152 927 267 a UA
948 80 1101 285 #8c0c25 LA s|966 152 1030 267 d WN|1034 152 1083 189 a DL|1034 193 1083 228 a MQ|1034 233 1083 267 a AA
526 291 672 468 #b61f2e AL s|543 363 635 450 e EV|640 363 654 450 a DL
526 475 672 651 #7f0821 OR s|543 546 597 635 c WN|601 546 654 604 b OO|601 608 654 635 a AS
526 658 672 806 #730520 AR s|543 730 585 788 a DL|590 730 632 788 a MQ|636 730 654 788 a OO
677 291 825 437 #73041f IN s|695 363 738 419 b WN|742 363 783 388 a DL|742 393 783 419 a OO|788 363 806 419 a US
830 291 979 437 #73041f KY s|848 363 890 419 b OO|895 363 936 388 a DL|895 393 936 419 a EV|941 363 960 419 a WN
983 291 1101 437 #73041f IA s|1001 363 1039 419 b MQ|1043 363 1083 388 a OO|1043 393 1083 419 a DL
677 442 799 584 b OK s|695 513 735 567 b OO|740 513 781 567 b WN
804 442 899 577 a KS s|821 513 860 535 a DL|821 538 860 558 a EV|864 513 881 558 a OO
903 442 999 577 #73041f MT s|921 513 961 558 b OO|966 513 982 558 a DL
1004 442 1101 577 #73041f PR s|1022 513 1060 558 b WN|1065 513 1083 558 a B6
677 589 799 694 #73041f AK s|695 660 750 678 b AS|755 660 781 678 a OO
677 700 799 806 a CT s|695 771 720 788 a AA|725 771 750 788 a OO|755 771 781 788 a B6
804 582 879 690 b ID s|821 653 860 671 b OO
804 696 879 806 b MS s|821 767 860 788 b EV
883 582 990 660 a ND s|993 582 1101 660 a NE s|883 664 1005 733 b NM s|883 738 1005 806 a SC s|1010 664 1101 709 a ME s|1010 714 1101 757 a RI s|1010 762 1101 806 a SD s`]];
let out='';
for(const [ox,oy,src] of blocks)for(const r of src.split(/[|\n]/)){
  const p=r.trim().split(' ');const [x1,y1,x2,y2]=p.slice(0,4).map(Number);
  const fill=K[p[4]]||p[4],head=p[6]==='s';
  const x=ox+x1/3,y=Math.max(oy+y1/3,386.700),w=(x2-x1)/3,b=oy+y2/3,h=b-y;
  const v=[1,3,5].map(i=>parseInt(fill.slice(i,i+2),16));
  const dark=.299*v[0]+.587*v[1]+.114*v[2]>135;
  out+=`<rect x="${(x+.6).toFixed(1)}" y="${(y+.6).toFixed(1)}" width="${(w-1.2).toFixed(1)}" height="${(h-1.2).toFixed(1)}" fill="${fill}" stroke="#fff" stroke-opacity="${head?.6:.75}" stroke-width="1.3"/>`;
  if(p[5]==='-'||oy+y1/3<385)continue;
  let s,tx,ty;
  if(head){s=h<18?.62:(w<26?.85:1);tx=x+(x1===39?8:6.500);ty=y+(h<18?10.500:4.500+11.700*s)}
  else{s=Math.max(.24,Math.min(1,(w-7.500)/(W[p[5]]||15.800),(h-6.600)/15.600));tx=x+3.800;ty=y+3.300+11.700*s;if(w<7)tx=x+3.500;if(h<10)ty=y+h/2+2}
  out+=`<text x="${tx.toFixed(1)}" y="${ty.toFixed(1)}" font-size="${(12*s).toFixed(2)}" fill="${dark?'#444':'#fff'}">${p[5]}</text>`;
}
document.getElementById('tree').insertAdjacentHTML('beforeend',out);
</script>
</body>
</html>
